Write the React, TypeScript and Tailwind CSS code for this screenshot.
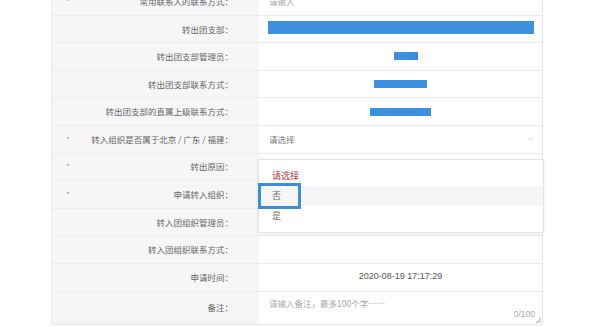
import { ChevronUp } from "lucide-react";

interface Row { label: string; req?: boolean; value?: React.ReactNode; h?: string }

const bar = (w: string, h: string) => <span className={`inline-block bg-[#3d8fdf] ${w} ${h}`} />;

const ROWS: Row[] = [
  { label: "常用联系人的联系方式：", req: true, value: <span className="pl-[10px] text-[#aaa]">请输入</span> },
  { label: "转出团支部：", value: <div className="pl-[9px] pr-[8px]">{bar("w-full", "h-[13px]")}</div> },
  { label: "转出团支部管理员：", value: <div className="flex justify-center pl-[10px]">{bar("w-[24px]", "h-[8px]")}</div> },
  { label: "转出团支部联系方式：", value: <div className="flex justify-center">{bar("w-[53px]", "h-[8px]")}</div> },
  { label: "转出团支部的直属上级联系方式：", value: <div className="flex justify-center">{bar("w-[61px]", "h-[8px]")}</div> },
  {
    label: "转入组织是否属于北京 / 广东 / 福建：", req: true,
    value: (
      <div className="flex items-center justify-between pl-[10px] pr-[6px] text-[#777]">
        <span>请选择</span>
        <ChevronUp size={11} strokeWidth={1.5} className="text-[#c8c8c8]" />
      </div>
    ),
  },
  { label: "转出原因：", req: true },
  { label: "申请转入组织：", req: true },
  { label: "转入团组织管理员：" },
  { label: "转入团组织联系方式：" },
  { label: "申请时间：", value: <div className="text-center text-[9px] text-[#555] font-['Liberation_Sans',sans-serif]">2020-08-19 17:17:29</div> },
];

export default function App() {
  return (
    <div className="h-[327px] w-[600px] overflow-hidden bg-white font-['Noto_Sans_CJK_SC','Noto_Sans',sans-serif] text-[8.5px] text-[#666]">
      <div className="relative ml-[51px] mt-[-12px] w-[492px] border-x border-b border-[#e6e6e6]">
        {ROWS.map((r) => (
          <div key={r.label} className="flex h-[27.6px] border-b border-[#ebebeb]">
            <div className="flex w-[207px] items-center bg-[#f6f6f7] pr-[26px]">
              <span className="w-[16px] pl-[14px] text-[#d9a0a0]">{r.req ? "*" : ""}</span>
              <span className="flex-1 text-right">{r.label}</span>
            </div>
            <div className="flex flex-1 flex-col justify-center">{r.value}</div>
          </div>
        ))}
        <div className="flex h-[32px]">
          <div className="flex w-[207px] items-center justify-end bg-[#f6f6f7] pr-[26px]">备注：</div>
          <div className="relative flex-1 pl-[10px] pt-[5px] text-[#aaa]">
            请输入备注，最多100个字……
            <span className="absolute bottom-[3px] right-[7px] font-['Liberation_Sans',sans-serif] text-[#aaa]">0/100</span>
            <svg className="absolute bottom-[1px] right-[1px]" width="6" height="6" viewBox="0 0 6 6">
              <path d="M1 6 L6 1 M3.5 6 L6 3.5" stroke="#999" strokeWidth="0.8" />
            </svg>
          </div>
        </div>

        <div className="absolute left-[206px] top-[171px] w-[286px] border border-[#e4e4e4] bg-white py-[6px] shadow-[0_1px_4px_rgba(0,0,0,0.08)]">
          <div className="flex h-[20px] items-center pl-[13px] text-[9px] text-[#b23a3f]">请选择</div>
          <div className="flex h-[20px] items-center bg-[#f5f6f8] pl-[13px] text-[9px] text-[#666]">否</div>
          <div className="flex h-[20px] items-center pl-[13px] text-[9px] text-[#777]">是</div>
        </div>
        <div className="absolute left-[206px] top-[195px] h-[26px] w-[43px] border-[3px] border-[#3c8fd8]" />
      </div>
    </div>
  );
}
